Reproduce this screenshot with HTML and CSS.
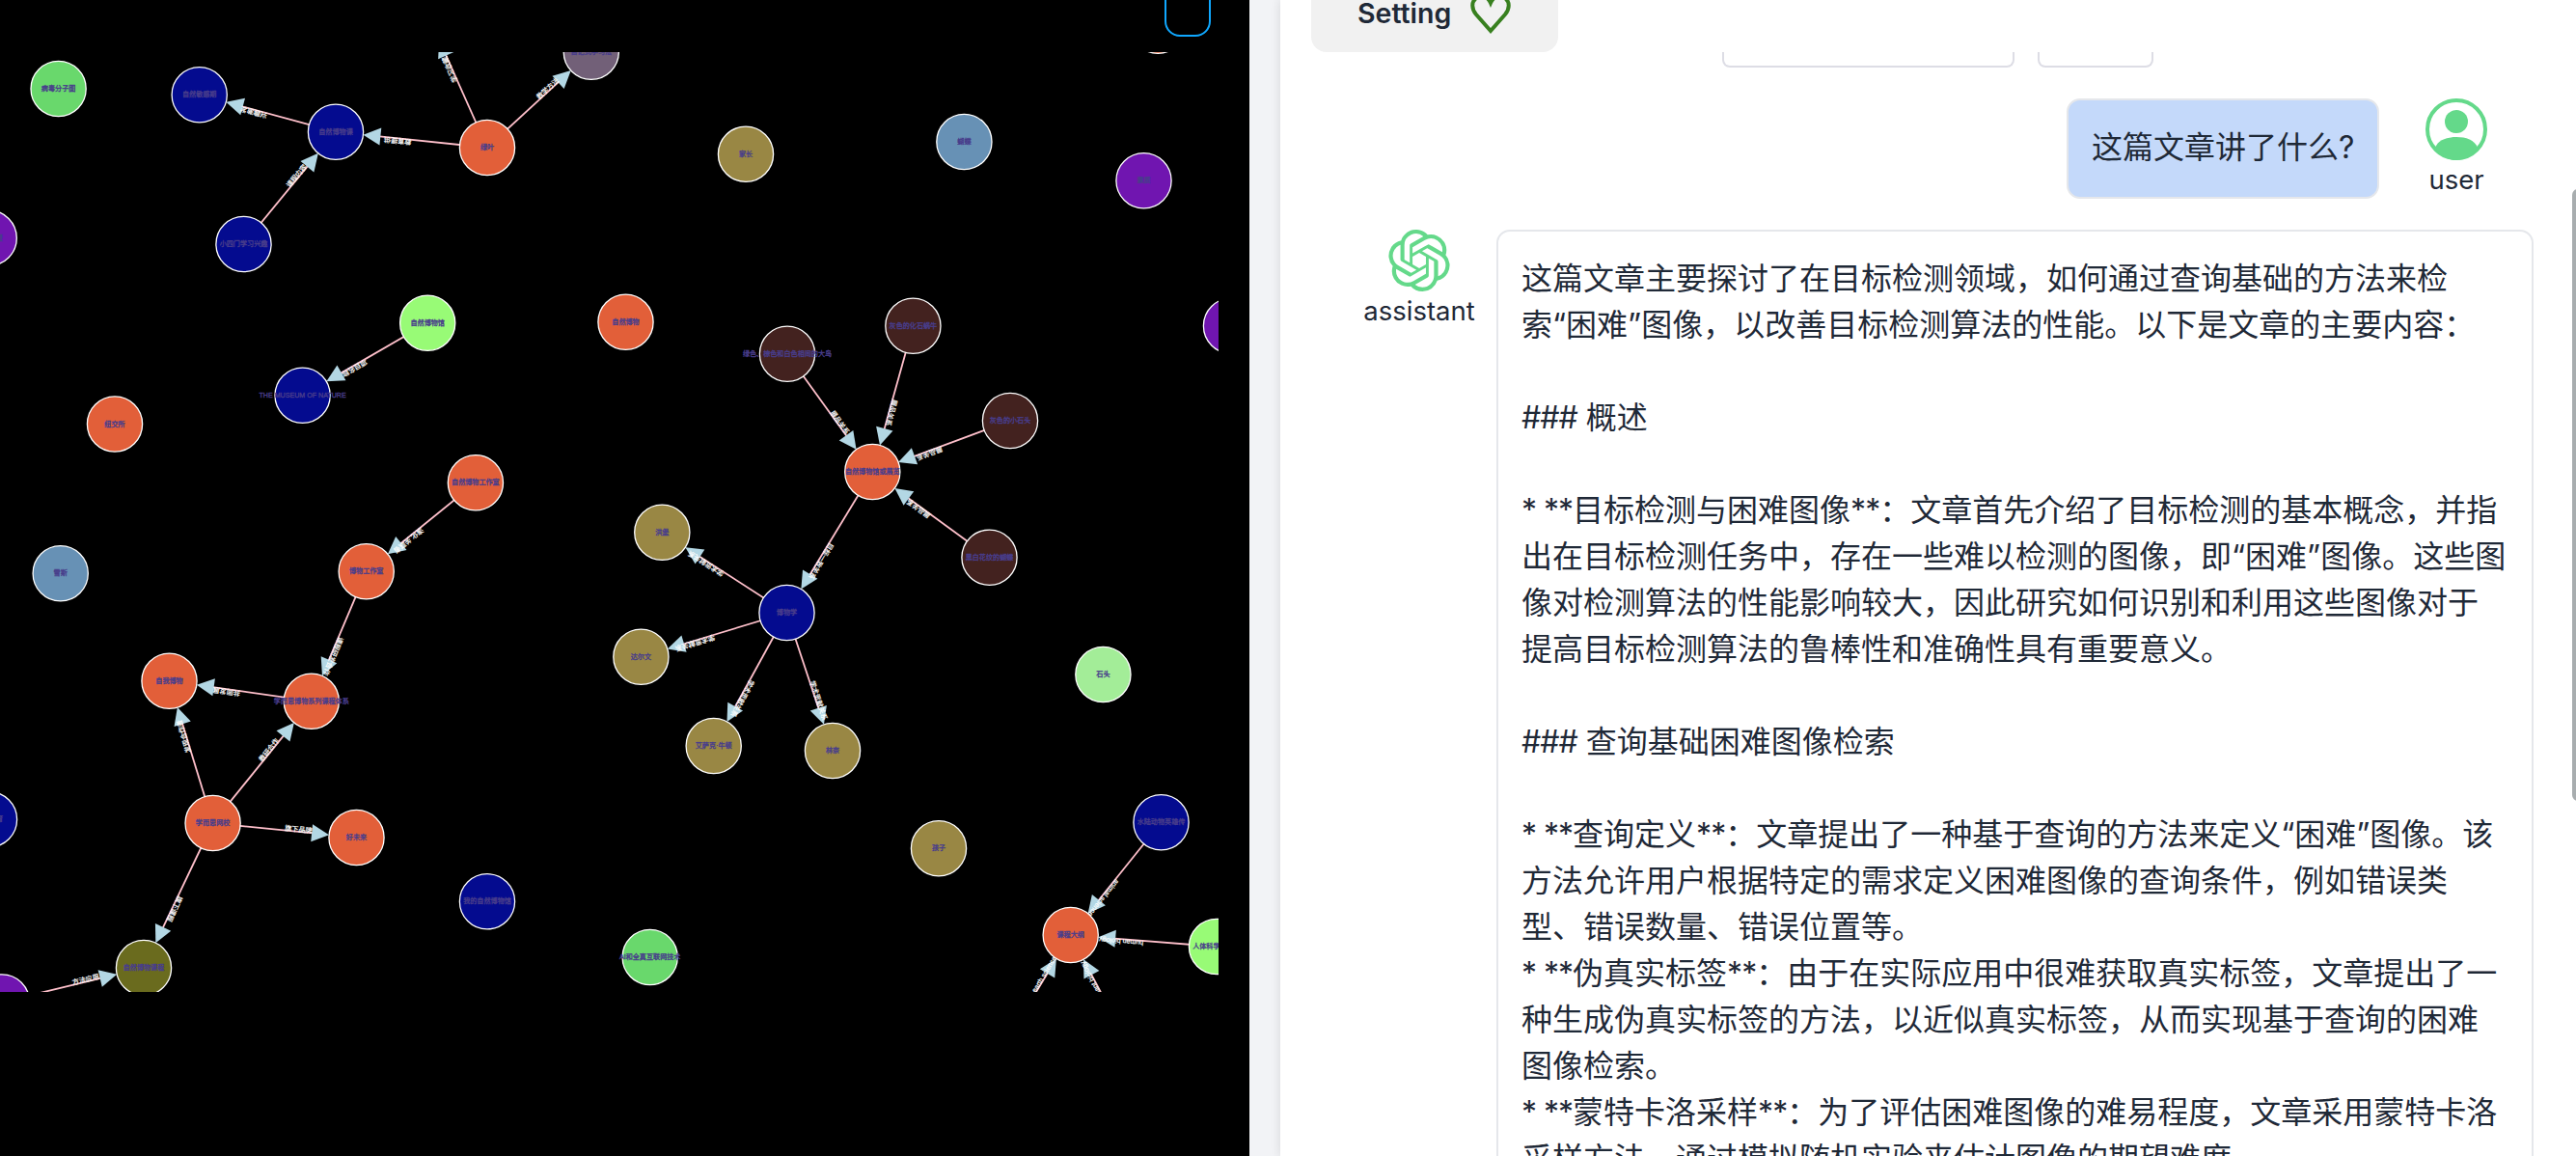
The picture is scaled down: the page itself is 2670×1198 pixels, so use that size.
FILE: index.html
```html
<!DOCTYPE html>
<html lang="zh-CN">
<head>
<meta charset="utf-8">
<title>Knowledge graph chat</title>
<link rel="stylesheet" href="styles.css">
</head>
<body>
<main class="layout">
  <section class="graph-pane">
    <div class="graph-header"><span class="toggle"></span></div>
    <svg class="graph" id="graph" viewBox="0 54 1263 974"></svg>
  </section>
  <section class="chat-pane">
    <header class="chat-header">
      <div class="setting">
        <span>Setting</span>
        <svg class="heart" viewBox="0 0 48 48"><path d="M24 42 L9 25 C4 19 4 12 9 8 C14 4 21 6 24 13 C27 6 34 4 39 8 C44 12 44 19 39 25 Z"/></svg>
      </div>
    </header>
    <div class="chat-body">
      <div class="options"><div class="option wide"></div><div class="option narrow"></div></div>
      <div class="message from-user">
        <div class="bubble">这篇文章讲了什么?</div>
        <div class="avatar">
          <svg class="user-icon" viewBox="0 0 64 64"><circle class="ring" cx="32" cy="32" r="30"/><circle cx="32" cy="24" r="12"/><path d="M10 51 C13 43 22 40 32 40 C42 40 51 43 54 51 C49 59 41 64 32 64 C23 64 15 59 10 51Z"/></svg>
          <span>user</span>
        </div>
      </div>
      <div class="message from-assistant">
        <div class="avatar">
          <svg class="ai-icon" viewBox="0 0 24 24"><path d="M22.2819 9.8211a5.9847 5.9847 0 0 0-.5157-4.9108 6.0462 6.0462 0 0 0-6.5098-2.9A6.0651 6.0651 0 0 0 4.9807 4.1818a5.9847 5.9847 0 0 0-3.9977 2.9 6.0462 6.0462 0 0 0 .7427 7.0966 5.98 5.98 0 0 0 .511 4.9107 6.051 6.051 0 0 0 6.5146 2.9001A5.9847 5.9847 0 0 0 13.2599 24a6.0557 6.0557 0 0 0 5.7718-4.2058 5.9894 5.9894 0 0 0 3.9977-2.9001 6.0557 6.0557 0 0 0-.7475-7.073zm-9.022 12.6081a4.4755 4.4755 0 0 1-2.8764-1.0408l.1419-.0804 4.7783-2.7582a.7948.7948 0 0 0 .3927-.6813v-6.7369l2.02 1.1686a.071.071 0 0 1 .038.052v5.5826a4.504 4.504 0 0 1-4.4945 4.4944zm-9.6607-4.1254a4.4708 4.4708 0 0 1-.5346-3.0137l.142.0852 4.783 2.7582a.7712.7712 0 0 0 .7806 0l5.8428-3.3685v2.3324a.0804.0804 0 0 1-.0332.0615L9.74 19.9502a4.4992 4.4992 0 0 1-6.1408-1.6464zM2.3408 7.8956a4.485 4.485 0 0 1 2.3655-1.9728V11.6a.7664.7664 0 0 0 .3879.6765l5.8144 3.3543-2.0201 1.1685a.0757.0757 0 0 1-.071 0l-4.8303-2.7865A4.504 4.504 0 0 1 2.3408 7.872zm16.5963 3.8558L13.1038 8.364 15.1192 7.2a.0757.0757 0 0 1 .071 0l4.8303 2.7913a4.4944 4.4944 0 0 1-.6765 8.1042v-5.6772a.79.79 0 0 0-.407-.667zm2.0107-3.0231l-.142-.0852-4.7735-2.7818a.7759.7759 0 0 0-.7854 0L9.409 9.2297V6.8974a.0662.0662 0 0 1 .0284-.0615l4.8303-2.7866a4.4992 4.4992 0 0 1 6.6802 4.66zM8.3065 12.863l-2.02-1.1638a.0804.0804 0 0 1-.038-.0567V6.0742a4.4992 4.4992 0 0 1 7.3757-3.4537l-.142.0805L8.704 5.459a.7948.7948 0 0 0-.3927.6813zm1.0976-2.3654l2.602-1.4998 2.6069 1.4998v2.9994l-2.5974 1.4997-2.6067-1.4997Z"/></svg>
          <span>assistant</span>
        </div>
        <div class="bubble">这篇文章主要探讨了在目标检测领域，如何通过查询基础的方法来检
索“困难”图像，以改善目标检测算法的性能。以下是文章的主要内容：

<span class="mark">###</span> 概述

<span class="mark">* **</span>目标检测与困难图像<span class="mark">**</span>：文章首先介绍了目标检测的基本概念，并指
出在目标检测任务中，存在一些难以检测的图像，即“困难”图像。这些图
像对检测算法的性能影响较大，因此研究如何识别和利用这些图像对于
提高目标检测算法的鲁棒性和准确性具有重要意义。

<span class="mark">###</span> 查询基础困难图像检索

<span class="mark">* **</span>查询定义<span class="mark">**</span>：文章提出了一种基于查询的方法来定义“困难”图像。该
方法允许用户根据特定的需求定义困难图像的查询条件，例如错误类
型、错误数量、错误位置等。
<span class="mark">* **</span>伪真实标签<span class="mark">**</span>：由于在实际应用中很难获取真实标签，文章提出了一
种生成伪真实标签的方法，以近似真实标签，从而实现基于查询的困难
图像检索。
<span class="mark">* **</span>蒙特卡洛采样<span class="mark">**</span>：为了评估困难图像的难易程度，文章采用蒙特卡洛
采样方法，通过模拟随机实验来估计图像的期望难度。</div>
      </div>
      <span class="scroll-thumb"></span>
    </div>
  </section>
</main>
<script src="graph.js"></script>
</body>
</html>
```
FILE: styles.css
```css
* { box-sizing: border-box; }
body { margin: 0; overflow: hidden; background: #f2f3f6; color: #1f2937; font-family: Inter, "Noto Sans CJK SC", sans-serif; }
.layout { display: flex; gap: 32px; height: 1198px; }
.graph-pane { width: 1295px; flex: none; background: #000; }
.graph-header { height: 54px; padding-left: 1207px; overflow: hidden; }
.toggle { display: block; width: 48px; height: 54px; margin-top: -16px; border: 2px solid #10a8ff; border-radius: 16px; }
.graph { display: block; width: 1263px; height: 974px; overflow: hidden; }
.graph circle { stroke: #fff; stroke-width: 1.3px; }
.graph .link { stroke: #ffc0cb; stroke-width: 1.8px; }
.graph .arrow { fill: #b3d7e4; }
.graph text { font: 7.1px "Liberation Sans", "Noto Sans CJK SC", sans-serif; }
.graph .link-label { fill: #fff; stroke: #fff; stroke-width: .2px; }
.graph .node-label { fill: #483d8b; stroke: #483d8b; stroke-width: .35px; text-anchor: middle; }
.chat-pane { flex: 1; background: #fff; box-shadow: 0 0 10px rgba(0,0,0,.12); display: flex; flex-direction: column; overflow: hidden; clip-path: inset(0 0 0 -32px); }
.chat-header { height: 54px; flex: none; padding-left: 32px; display: flex; align-items: flex-end; }
.setting { width: 256px; height: 80px; padding: 26px 0 26px 48px; display: flex; align-items: center; gap: 17px; background: #f1f1f1; border-radius: 0 0 16px 16px; font-size: 28.5px; font-weight: 600; line-height: 40px; }
.heart { width: 48px; height: 48px; fill: none; stroke: #38801f; stroke-width: 4px; }
.chat-body { flex: 1; position: relative; overflow: hidden; }
.options { display: flex; gap: 24px; height: 16px; padding-left: 458px; }
.option { height: 16px; border: 2px solid #dddde5; border-top: 0; border-radius: 0 0 8px 8px; }
.wide { width: 303px; }
.narrow { width: 120px; }
.message { display: flex; }
.from-user { justify-content: flex-end; margin-top: 32px; padding-right: 84px; gap: 40px; }
.from-assistant { margin-top: 32px; padding-left: 76px; }
.bubble { border: 2px solid #e5e7eb; border-radius: 14px; padding: 25px 24px 0; font-size: 32px; line-height: 48px; white-space: pre; }
.from-user .bubble { width: 324px; height: 104px; background: #c4d9fa; }
.from-assistant .bubble { width: 1075px; height: 1100px; }
.mark { letter-spacing: -1px; }
.avatar { display: flex; flex-direction: column; align-items: center; font-size: 27.5px; line-height: 36px; }
.from-user .avatar { width: 80px; }
.from-assistant .avatar { width: 136px; margin-right: 12px; }
.avatar svg { width: 64px; height: 64px; fill: #64d98a; margin-bottom: 2px; }
.avatar .ring { fill: none; stroke: #64d98a; stroke-width: 4px; }
.scroll-thumb { position: absolute; right: -8px; top: 142px; width: 12px; height: 634px; border-radius: 6px; background: #a8adaf; }
```
FILE: graph.js
```js
const RADIUS = 28.6;
const ARROW = 18;
const colors = {
  place: '#e25f39', topic: '#040b8f', person: '#998744', insect: '#6791b5', trait: '#7015b0',
  exhibit: '#43221f', tech: '#69d86c', museum: '#98fb76', stone: '#a3ed98', method: '#726078', course: '#6a6b1e'
};
const nodes = {
  virus: [60.6, 92, 'tech', '病毒分子图'],
  sensitive: [206.7, 98.3, 'topic', '自然敏感期'],
  lesson: [348, 136.7, 'topic', '自然博物课'],
  leaf: [505, 153, 'place', '绿叶'],
  diary: [612.8, 53.7, 'method', '自记式学习法'],
  above: [443.4, 15, 'topic', ''],
  interest: [252.5, 253, 'topic', '小四门学习兴趣'],
  leftTrait: [-11.3, 246.7, 'trait', '探索欲望'],
  natureMuseum: [443.2, 334.7, 'museum', '自然博物馆'],
  englishMuseum: [313.6, 409.7, 'topic', 'THE MUSEUM OF NATURE'],
  exchange: [119, 439.5, 'place', '纽交所'],
  nature: [648.5, 333.7, 'place', '自然博物'],
  parent: [773, 159.7, 'person', '家长'],
  butterfly: [999.4, 147, 'insect', '蝴蝶'],
  quality: [1185.5, 187.3, 'trait', '素质'],
  bird: [816, 366.7, 'exhibit', '绿色、棕色和白色相间的大鸟'],
  snail: [946.4, 337.7, 'exhibit', '灰色的化石蜗牛'],
  pebble: [1047, 436, 'exhibit', '灰色的小石头'],
  rightTrait: [1276, 337.7, 'trait', ''],
  topPlace: [1200.2, 26.7, 'place', ''],
  natureStudio: [492.9, 500.3, 'place', '自然博物工作室'],
  studio: [379.7, 592.3, 'place', '博物工作室'],
  snow: [62.7, 594.3, 'insect', '雪斯'],
  self: [175.5, 705.7, 'place', '自我博物'],
  series: [322.8, 726.7, 'place', '学而思博物系列课程体系'],
  exhibition: [904.3, 489, 'place', '自然博物馆或展览'],
  humboldt: [686.3, 551.7, 'person', '洪堡'],
  blackWhite: [1025.5, 577.7, 'exhibit', '黑白花纹的蝴蝶'],
  history: [815.5, 635, 'topic', '博物学'],
  darwin: [664.4, 680.7, 'person', '达尔文'],
  newton: [739.7, 773, 'person', '艾萨克·牛顿'],
  linnaeus: [863, 778, 'person', '林奈'],
  stone: [1143.4, 699, 'stone', '石头'],
  school: [220.6, 853, 'place', '学而思网校'],
  future: [369.5, 868, 'place', '好未来'],
  myMuseum: [505, 934.3, 'topic', '我的自然博物馆'],
  leftTopic: [-11, 849.3, 'topic', '科学教育'],
  course: [149, 1003, 'course', '自然博物课程'],
  bottomTrait: [2, 1038.5, 'trait', ''],
  internet: [673.7, 992, 'tech', 'AI和全真互联网技术'],
  child: [973, 879.3, 'person', '孩子'],
  animals: [1203.5, 852.3, 'topic', '水陆动物英雄传'],
  outline: [1109.7, 969, 'place', '课程大纲'],
  human: [1261, 981, 'museum', '人体科学博物馆'],
  belowLeft: [1037, 1089, 'topic', ''],
  belowRight: [1175, 1093, 'topic', '']
};
const links = [
  ['lesson', 'sensitive', '兴趣激发'], ['leaf', 'lesson', '教育提供'], ['interest', 'lesson', '课程内容'],
  ['leaf', 'above', '学习收藏'], ['leaf', 'diary', '教学方法'], ['natureMuseum', 'englishMuseum', '项目名称'],
  ['natureStudio', 'studio', '演化 关联者'], ['studio', 'series', '课程研发合作'], ['series', 'self', '共同发展'],
  ['school', 'self', '发现合作者'], ['school', 'series', '教研合作'], ['school', 'future', '旗下品牌'],
  ['school', 'course', '旗下课程'], ['bottomTrait', 'course', '方法应用'],
  ['bird', 'exhibition', '展品关系'], ['snail', 'exhibition', '展品关系'], ['pebble', 'exhibition', '展品关系'],
  ['blackWhite', 'exhibition', '展品关系'], ['exhibition', 'history', '目标一致关系'],
  ['history', 'humboldt', '学术贡献关系'], ['history', 'darwin', '学术贡献关系'],
  ['history', 'newton', '学术贡献关系'], ['history', 'linnaeus', '学术贡献关系'],
  ['animals', 'outline', 'animal science'], ['human', 'outline', 'human biology'],
  ['belowLeft', 'outline', 'earth sciences'], ['belowRight', 'outline', 'plant biology']
];
const svg = document.getElementById('graph');
function add(tag, attrs, text) {
  const el = document.createElementNS('http://www.w3.org/2000/svg', tag);
  for (const key in attrs) el.setAttribute(key, attrs[key]);
  if (text) el.textContent = text;
  svg.appendChild(el);
}
for (const [from, to, label] of links) {
  const [x1, y1] = nodes[from], [x2, y2] = nodes[to];
  const angle = Math.atan2(y2 - y1, x2 - x1) * 180 / Math.PI;
  const length = Math.hypot(x2 - x1, y2 - y1);
  const tip = length - RADIUS;
  const transform = `translate(${x1} ${y1}) rotate(${angle})`;
  add('line', { class: 'link', x1: 0, y1: 0, x2: tip - ARROW + 1, y2: 0, transform });
  add('path', { class: 'arrow', d: `M${tip} 0l${-ARROW} -9v18z`, transform });
  add('text', { class: 'link-label', x: length / 2, y: 0, transform }, label);
}
for (const [x, y, kind, label] of Object.values(nodes)) {
  add('circle', { cx: x, cy: y, r: RADIUS, fill: colors[kind] });
  if (label) add('text', { class: 'node-label', x, y: y + 2 }, label);
}
```
